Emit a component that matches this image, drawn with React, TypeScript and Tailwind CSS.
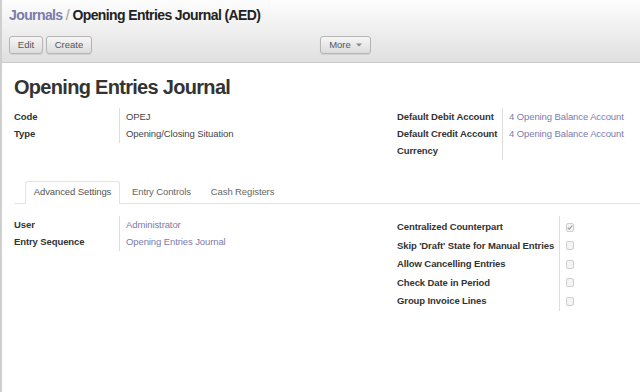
const font = { fontFamily: '"Liberation Sans", Arial, sans-serif' }

function Btn({ children, className = '' }: { children: React.ReactNode; className?: string }) {
  return (
    <button
      className={`h-[18px] px-[7px] border border-[#b5b5b5] rounded-[3px] bg-gradient-to-b from-[#f6f6f6] to-[#dcdcdc] text-[9.5px] leading-none text-[#555] shadow-[0_1px_1px_rgba(0,0,0,0.08)] ${className}`}
    >
      {children}
    </button>
  )
}

function Field({ label, value, link }: { label: string; value?: string; link?: boolean }) {
  return (
    <div className="flex h-[17px] items-center whitespace-nowrap">
      <div className="w-[105px] shrink-0 font-bold text-[9.5px] tracking-[-0.1px] text-[#333]">{label}</div>
      <div className={`pl-[7px] text-[9.5px] tracking-[-0.1px] ${link ? 'text-[#7c7bad]' : 'text-[#444]'}`}>{value}</div>
    </div>
  )
}

function Check({ label, checked }: { label: string; checked?: boolean }) {
  return (
    <div className="flex h-[18.5px] items-center whitespace-nowrap">
      <div className="w-[162px] shrink-0 font-bold text-[9.5px] tracking-[-0.1px] text-[#333]">{label}</div>
      <div className="pl-[7px]">
        <div className="w-[8px] h-[9px] border border-[#cfcfcf] rounded-[2px] bg-[#f4f4f4] flex items-center justify-center">
          {checked && (
            <svg width="7" height="7" viewBox="0 0 8 8">
              <path d="M1 4.2 L3 6.2 L7 1.5" stroke="#9a9a9a" strokeWidth="1.4" fill="none" />
            </svg>
          )}
        </div>
      </div>
    </div>
  )
}

export default function App() {
  return (
    <div style={font} className="w-[640px] h-[392px] bg-white border-l-2 border-[#cfcfcf] overflow-hidden">
      {/* Header */}
      <div className="h-[63px] bg-gradient-to-b from-[#fdfdfd] to-[#e0e0e0] border-b border-[#cacaca] pl-[7px]">
        <div className="pt-[6px] text-[14px] tracking-[-0.6px] font-bold leading-[18px] whitespace-nowrap">
          <span className="text-[#7c7bad]">Journals</span>
          <span className="text-[#999] font-normal"> / </span>
          <span className="text-[#222]">Opening Entries Journal (AED)</span>
        </div>
        <div className="flex mt-[12px]">
          <div className="w-[311px] flex gap-[3px]">
            <Btn className="w-[34px]">Edit</Btn>
            <Btn className="w-[46px]">Create</Btn>
          </div>
          <Btn className="w-[51px] flex items-center justify-center gap-[5px]">
            More
            <svg width="6" height="4" viewBox="0 0 6 4">
              <path d="M0 0.5 H6 L3 3.5 Z" fill="#888" />
            </svg>
          </Btn>
        </div>
      </div>

      {/* Sheet */}
      <div className="pl-[12px]">
        <h1 className="mt-[11px] text-[20px] tracking-[-0.7px] font-bold text-[#333] leading-[26px] whitespace-nowrap">
          Opening Entries Journal
        </h1>

        <div className="flex mt-[9px]">
          <div className="w-[383px] relative">
            <div className="absolute left-[105px] top-[-1px] h-[35px] border-l border-[#ddd]" />
            <Field label="Code" value="OPEJ" />
            <Field label="Type" value="Opening/Closing Situation" />
          </div>
          <div className="relative">
            <div className="absolute left-[105px] top-[-1px] h-[52px] border-l border-[#ddd]" />
            <Field label="Default Debit Account" value="4 Opening Balance Account" link />
            <Field label="Default Credit Account" value="4 Opening Balance Account" link />
            <Field label="Currency" />
          </div>
        </div>

        {/* Tabs */}
        <div className="mt-[21px] flex items-end h-[23px] border-b border-[#e3e3e3] pl-[11px] text-[9.5px] tracking-[-0.1px] text-[#555] whitespace-nowrap">
          <div className="h-[23px] w-[95px] flex items-center justify-center border border-b-0 border-[#e3e3e3] rounded-t-[3px] bg-white mb-[-1px] pb-[1px]">
            Advanced Settings
          </div>
          <div className="h-[22px] pl-[12px] flex items-center text-[#666]">Entry Controls</div>
          <div className="h-[22px] pl-[20px] flex items-center text-[#666]">Cash Registers</div>
        </div>

        <div className="flex mt-[13px]">
          <div className="w-[383px] relative">
            <div className="absolute left-[105px] top-[-1px] h-[35px] border-l border-[#ddd]" />
            <Field label="User" value="Administrator" link />
            <Field label="Entry Sequence" value="Opening Entries Journal" link />
          </div>
          <div className="relative mt-[1px]">
            <div className="absolute left-[162px] top-[-2px] h-[95px] border-l border-[#ddd]" />
            <Check label="Centralized Counterpart" checked />
            <Check label="Skip 'Draft' State for Manual Entries" />
            <Check label="Allow Cancelling Entries" />
            <Check label="Check Date in Period" />
            <Check label="Group Invoice Lines" />
          </div>
        </div>
      </div>
    </div>
  )
}
